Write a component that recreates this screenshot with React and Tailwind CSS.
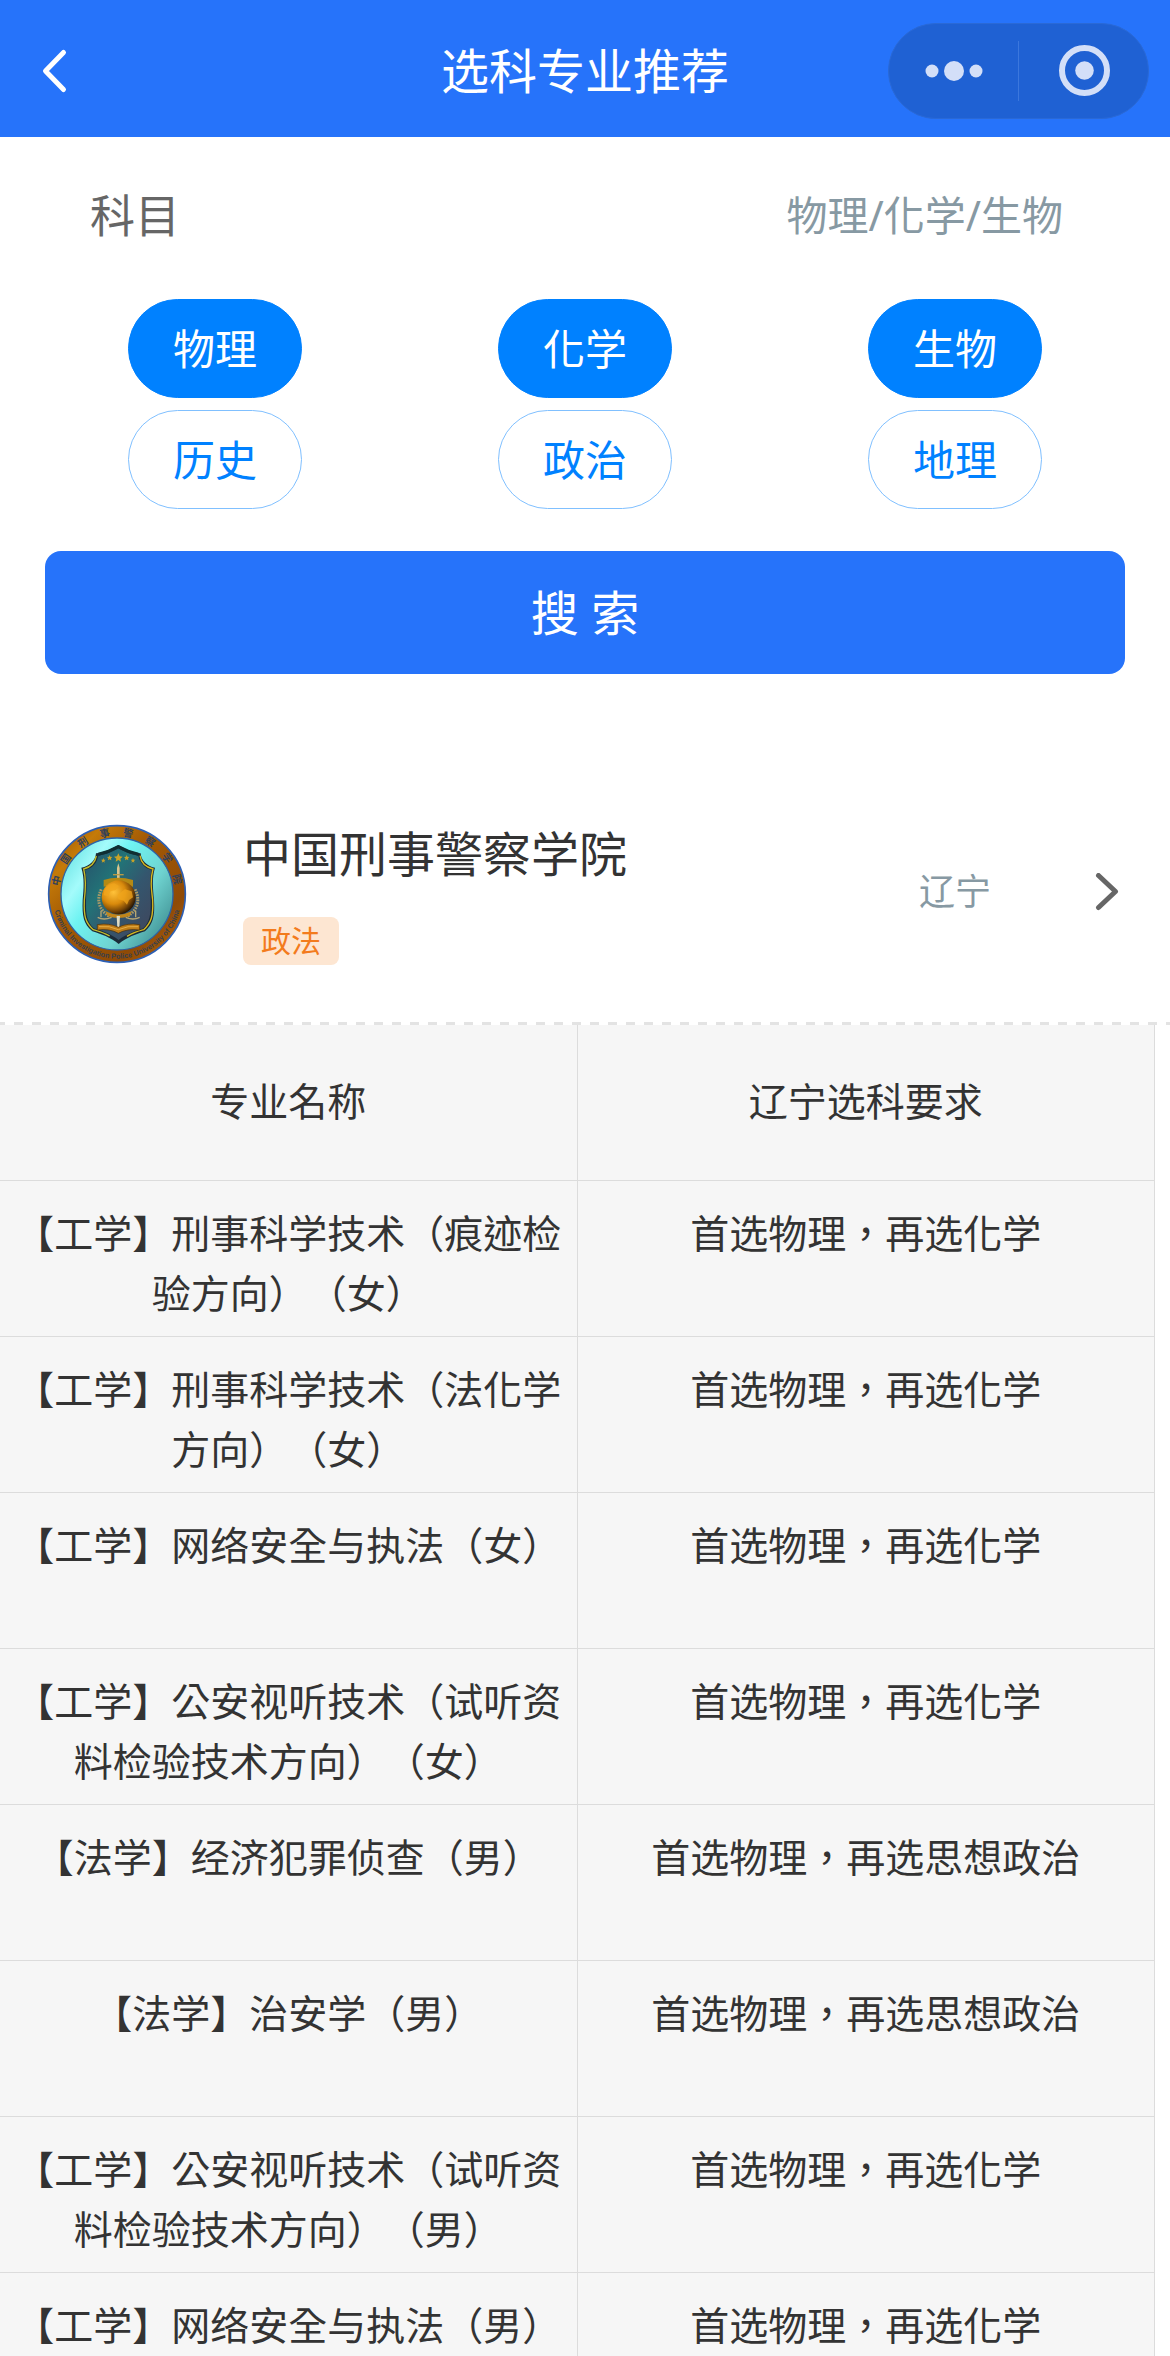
import React, { useState } from 'react'

const subjects = ['物理', '化学', '生物', '历史', '政治', '地理']

const college = {
  name: '中国刑事警察学院',
  tag: '政法',
  province: '辽宁'
}

const majors = [
  { name: '【工学】刑事科学技术（痕迹检验方向）（女）', requirement: '首选物理，再选化学' },
  { name: '【工学】刑事科学技术（法化学方向）（女）', requirement: '首选物理，再选化学' },
  { name: '【工学】网络安全与执法（女）', requirement: '首选物理，再选化学' },
  { name: '【工学】公安视听技术（试听资料检验技术方向）（女）', requirement: '首选物理，再选化学' },
  { name: '【法学】经济犯罪侦查（男）', requirement: '首选物理，再选思想政治' },
  { name: '【法学】治安学（男）', requirement: '首选物理，再选思想政治' },
  { name: '【工学】公安视听技术（试听资料检验技术方向）（男）', requirement: '首选物理，再选化学' },
  { name: '【工学】网络安全与执法（男）', requirement: '首选物理，再选化学' }
]

const Header = () => (
  <header className="relative flex h-[137px] shrink-0 items-center justify-center bg-[#2673fa] pt-1 text-white">
    <button type="button" aria-label="返回" className="absolute left-[36px]">
      <svg width="36" height="48" viewBox="0 0 36 48" fill="none" stroke="currentColor" strokeWidth="5" strokeLinecap="round" strokeLinejoin="round">
        <path d="M27.500 5.500 9.500 24 27.500 42.500" />
      </svg>
    </button>
    <h1 className="text-5xl">选科专业推荐</h1>

    {/* Mini program capsule */}
    <div className="absolute right-[21px] flex h-24 w-[261px] items-center rounded-full border border-[#2a69d6] bg-[#1f61d3] text-[#d3dff8]">
      <button type="button" aria-label="更多" className="flex h-full flex-1 items-center justify-center">
        <svg width="60" height="24" viewBox="0 0 60 24" fill="currentColor">
          <circle cx="8" cy="12" r="6.500" />
          <circle cx="30" cy="12" r="10" />
          <circle cx="52" cy="12" r="6.500" />
        </svg>
      </button>
      <div className="h-[60px] w-px bg-[#3b77dd]" />
      <button type="button" aria-label="关闭" className="flex h-full flex-1 items-center justify-center">
        <svg width="52" height="52" viewBox="0 0 52 52" fill="currentColor">
          <circle cx="26.500" cy="25.500" r="22.500" fill="none" stroke="currentColor" strokeWidth="6" />
          <circle cx="26.500" cy="25.500" r="9.300" />
        </svg>
      </button>
    </div>
  </header>
)

const Emblem = () => (
  <svg className="size-[140px] shrink-0" viewBox="50 72 420 420" role="img" aria-label="校徽">
    <defs>
      <linearGradient id="ring" x1="0" y1="0" x2="1" y2="1">
        <stop offset="0" stopColor="#8a4a08" />
        <stop offset="0.2" stopColor="#c47a08" />
        <stop offset="0.4" stopColor="#a35a05" />
        <stop offset="0.75" stopColor="#8f4a06" />
        <stop offset="1" stopColor="#b8690c" />
      </linearGradient>
      <linearGradient id="field" x1="0" y1="0.1" x2="1" y2="0.8">
        <stop offset="0" stopColor="#5fdfe0" />
        <stop offset="0.25" stopColor="#a4fbfb" />
        <stop offset="0.4" stopColor="#6ff3f2" />
        <stop offset="0.7" stopColor="#6fd3d0" />
        <stop offset="1" stopColor="#3f8f92" />
      </linearGradient>
      <linearGradient id="shield" x1="0" y1="0" x2="1" y2="1">
        <stop offset="0" stopColor="#27506b" />
        <stop offset="0.35" stopColor="#227377" />
        <stop offset="0.6" stopColor="#34566e" />
        <stop offset="1" stopColor="#41445a" />
      </linearGradient>
      <radialGradient id="globe" cx="0.35" cy="0.35" r="0.7">
        <stop offset="0" stopColor="#ffc23a" />
        <stop offset="0.5" stopColor="#d98a0c" />
        <stop offset="0.8" stopColor="#7a4706" />
        <stop offset="1" stopColor="#241503" />
      </radialGradient>
      <path id="topArc" d="M85 282a175 175 0 0 1 350 0" />
      <path id="bottomArc" d="M66 282a194 194 0 0 0 388 0" />
    </defs>

    <circle cx="260" cy="282" r="205" fill="url(#ring)" stroke="#2c5fb4" strokeWidth="5" />
    <circle cx="260" cy="282" r="168" fill="url(#field)" stroke="#2b63a8" strokeWidth="4" />
    <text fontSize="30" fontWeight="700" fill="#30405a" fontFamily="Noto Sans CJK TC, sans-serif">
      {['中', '国', '刑', '事', '警', '察', '学', '院'].map((char, i) => (
        <textPath key={char} href="#topArc" startOffset={`${7 + i * 12.2}%`} textAnchor="middle">{char}</textPath>
      ))}
    </text>
    <text fontSize="22" fontWeight="700" fill="#38404c" fontFamily="Liberation Sans, sans-serif">
      <textPath href="#bottomArc" startOffset="50%" textAnchor="middle">Criminal Investigation Police University of China</textPath>
    </text>

    {/* Shield */}
    <path d="M264 135C240 150 215 158 197 160C196 180 178 200 153 203C163 235 160 265 157 300C155 350 160 372 186 394C212 402 240 412 265 432C290 412 318 402 344 394C368 372 374 350 371 300C368 265 364 235 374 203C350 200 332 180 331 160C312 158 288 150 264 135Z" fill="#1b2b38" />
    <path d="M264 145C240 159 220 165 204 167C200 188 186 205 164 210C171 238 169 268 167 300C166 345 170 366 191 385C216 393 242 402 265 420C288 402 314 393 338 385C358 366 362 345 361 300C359 268 357 238 364 210C344 205 328 188 324 167C308 165 288 159 264 145Z" fill="url(#shield)" />
    <path d="M198 168C194 188 180 202 160 207C168 238 166 268 162 300C160 348 165 368 189 389C206 394 222 399 238 408" fill="none" stroke="#c5bd2c" strokeWidth="4" />
    <path d="M329 167C332 188 348 202 368 207C359 238 363 268 367 300C369 348 363 368 340 389C320 394 304 400 290 409" fill="none" stroke="#d8b81e" strokeWidth="4" />
    <path d="M204 163C228 158 246 150 264 140C282 150 302 158 324 163" fill="none" stroke="#0f2f33" strokeWidth="9" />

    <g fill="#c9a227">
      <path d="M264 160l4 9 9 1-7 6 2 9-8-5-8 5 2-9-7-6 9-1z" />
      <path d="M238 165l2 5 6 1-4 4 1 6-5-3-5 3 1-6-4-4 6-1z" />
      <path d="M289 165l2 5 6 1-4 4 1 6-5-3-5 3 1-6-4-4 6-1z" />
      <path d="M219 174l2 5 5 0-4 4 1 5-4-3-5 3 2-5-4-4 5 0z" />
      <path d="M308 174l2 5 5 0-4 4 1 5-4-3-5 3 2-5-4-4 5 0z" />
    </g>

    {/* Sword, wreath, globe and book */}
    <path d="M264 190l4 14v36h-8v-36z" fill="#d9c58e" />
    <path d="M248 224h32" stroke="#b99b46" strokeWidth="4" />
    <path d="M220 240q43-14 88 0v20q-44-12-88 0z" fill="#b58a14" />
    <path d="M213 268C198 300 204 328 238 350M314 268C330 300 324 328 290 350" fill="none" stroke="#a99a68" strokeWidth="9" strokeDasharray="5 3" />
    <path d="M202 352q18 10 42 0M286 352q22 10 42 0M212 332v20M316 332v20" fill="none" stroke="#b7a774" strokeWidth="4" />
    <circle cx="265" cy="292" r="51" fill="url(#globe)" />
    <path d="M222 270q12-20 30-20l14 8-10 12-16 4-6 14-14-2zM262 284l22-16 20 6 4 18-12 8-6 14-10-12-16-4z" fill="#f0a51c" opacity="0.75" />
    <path d="M226 334q38 20 78 0l-6 14q-34 12-66 0z" fill="#c2861a" />
    <path d="M259 348h10l-2 36h-6z" fill="#e0dcc2" />
    <path d="M201 374q36-6 63 8q27-14 64-8v16q-38-5-64 10q-26-15-63-10z" fill="#c07d18" stroke="#4a2f08" strokeWidth="2" />
    <path d="M206 380q32-4 58 9q28-13 60-9" fill="none" stroke="#e5ad45" strokeWidth="3" />
  </svg>
)

const App = () => {
  const [selected, setSelected] = useState(['物理', '化学', '生物'])

  const toggle = (subject) => {
    setSelected((prev) =>
      prev.includes(subject) ? prev.filter((s) => s !== subject) : [...prev, subject]
    )
  }

  return (
    <div className="flex h-screen flex-col overflow-hidden bg-white font-['Noto_Sans','Noto_Sans_CJK_TC',sans-serif] text-[#333] [text-spacing-trim:space-all]">
      <Header />

      <main className="flex-1 overflow-y-auto [scrollbar-width:none]">
        {/* Subject filter */}
        <section>
          <div className="flex h-[158px] items-center justify-between pr-[107px] pl-[90px]">
            <h2 className="text-[45px] text-[#666]">科目</h2>
            <span className="text-[41px] text-[#8799a3]">{selected.join('/')}</span>
          </div>
          <div className="grid grid-cols-3 justify-items-center gap-y-3 px-[30px] pt-1">
            {subjects.map((subject) => (
              <button
                key={subject}
                type="button"
                aria-pressed={selected.includes(subject)}
                onClick={() => toggle(subject)}
                className={`h-[99px] w-[174px] rounded-full border text-[42px] ${
                  selected.includes(subject)
                    ? 'border-[#0081ff] bg-[#0081ff] text-white'
                    : 'border-[#80c0ff] bg-white text-[#0081ff]'
                }`}
              >
                {subject}
              </button>
            ))}
          </div>
          <div className="px-[45px] pt-[42px]">
            <button type="button" className="h-[123px] w-full rounded-2xl bg-[#2673fa] text-5xl text-white">
              搜 索
            </button>
          </div>
        </section>

        {/* College */}
        <a href="#college" className="mt-[75px] flex items-center pt-[74px] pr-[51px] pb-[57px] pl-[47px]">
          <Emblem />
          <div className="ml-14 flex flex-1 flex-col items-start gap-8">
            <h2 className="text-5xl leading-[62px]">{college.name}</h2>
            <span className="rounded-lg bg-[#fde6d2] px-[18px] text-3xl leading-[48px] text-[#f37b1d]">{college.tag}</span>
          </div>
          <span className="pb-1 text-4xl text-[#8799a3]">{college.province}</span>
          <svg className="ml-[104px]" width="24" height="42" viewBox="0 0 24 42" fill="none" stroke="#666" strokeWidth="5" strokeLinecap="round" strokeLinejoin="round">
            <path d="M3.500 2.500 20.500 18.500 3.500 34.500" />
          </svg>
        </a>
        <div className="h-[3px] bg-[repeating-linear-gradient(90deg,#e3e3e3_0_5px,transparent_5px_14px,#e3e3e3_14px_18px)]" />

        {/* Majors */}
        <div className="pr-[15px]">
          <table className="w-full table-fixed border-separate border-spacing-0 bg-[#f6f6f6] text-center text-[39px] leading-[60px]">
            <thead>
              <tr className="h-[156px]">
                <th className="border-r border-b border-[#dcdcdc] pb-1 font-normal">专业名称</th>
                <th className="border-r border-b border-[#dcdcdc] pb-1 font-normal">{college.province}选科要求</th>
              </tr>
            </thead>
            <tbody>
              {majors.map((major) => (
                <tr key={major.name} className="h-[156px] align-top">
                  <td className="border-r border-b border-[#dcdcdc] px-[15px] pt-[22px]">{major.name}</td>
                  <td className="border-r border-b border-[#dcdcdc] px-[15px] pt-[22px]">{major.requirement}</td>
                </tr>
              ))}
            </tbody>
          </table>
        </div>
      </main>
    </div>
  )
}

export default App
